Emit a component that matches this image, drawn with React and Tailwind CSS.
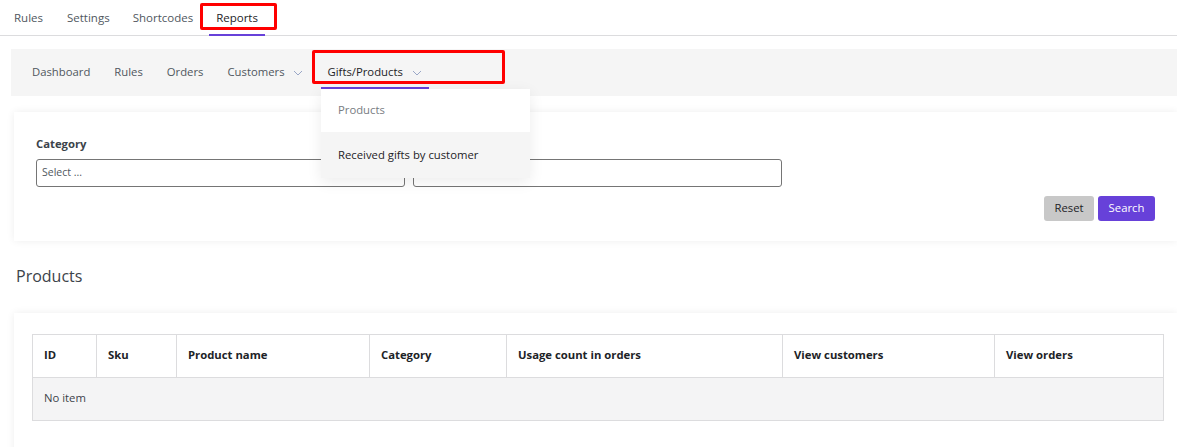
import React from 'react';

const Chevron = ({ className }) => (
  <svg className={className} width="10" height="6" viewBox="0 0 10 6" fill="none">
    <path d="M1 1l4 4 4-4" stroke="#9aa7c7" strokeWidth="1" />
  </svg>
);

const columns = [
  { label: 'ID', w: 'w-[64px]' },
  { label: 'Sku', w: 'w-[80px]' },
  { label: 'Product name', w: 'w-[193px]' },
  { label: 'Category', w: 'w-[137px]' },
  { label: 'Usage count in orders', w: 'w-[276px]' },
  { label: 'View customers', w: 'w-[212px]' },
  { label: 'View orders', w: 'w-[169px]' },
];

const App = () => {
  return (
    <div className="relative w-[1177px] h-[447px] overflow-hidden bg-white text-[#1d2327] text-[11.3px] font-['Open_Sans','Noto_Sans',sans-serif]">
      {/* top tabs */}
      <div className="flex items-end h-[36px] border-b border-[#dcdcde] pl-[14px] text-[11.5px] text-[#50575e]">
        <div className="pb-[9px]">Rules</div>
        <div className="pb-[9px] ml-[24px]">Settings</div>
        <div className="pb-[9px] ml-[23px]">Shortcodes</div>
        <div className="ml-[16px] px-[7px] pb-[8px] text-[#1d2327] border-b-[2px] border-[#6741d9] mb-[-1px]">
          Reports
        </div>
      </div>

      {/* sub nav */}
      <div className="mt-[13px] ml-[11px] h-[47px] bg-[#f5f5f5] flex items-center pl-[21px] text-[#50575e]">
        <div>Dashboard</div>
        <div className="ml-[24px]">Rules</div>
        <div className="ml-[24px]">Orders</div>
        <div className="ml-[24px] flex items-center">
          Customers
          <Chevron className="ml-[8px]" />
        </div>
        <div className="ml-[25px] flex items-center text-[#1d2327]">
          Gifts/Products
          <Chevron className="ml-[9px]" />
        </div>
      </div>

      {/* filter card */}
      <div className="mt-[16px] ml-[14px] bg-white shadow-[0_0_8px_rgba(0,0,0,0.07)] pt-[24px] pl-[22px] pr-[22px] pb-[20px]">
        <div className="font-bold text-[#3c434a]">Category</div>
        <div className="flex gap-[8px] mt-[6px]">
          <div className="w-[369px] h-[28px] border border-[#757575] rounded-[3px] flex items-center pl-[5px] text-[10.5px] text-[#50575e]">Select ...</div>
          <div className="w-[369px] h-[28px] border border-[#757575] rounded-[3px]"></div>
        </div>
        <div className="flex justify-end gap-[4px] mt-[9px]">
          <button className="w-[50px] h-[25px] rounded-[3px] bg-[#c8c8c8] text-[#1d2327]">Reset</button>
          <button className="w-[57px] h-[25px] rounded-[3px] bg-[#6741d9] text-white">Search</button>
        </div>
      </div>

      <h2 className="mt-[23px] ml-[16px] text-[16px] text-[#3c434a]">Products</h2>

      {/* table card */}
      <div className="mt-[25px] ml-[14px] h-[200px] bg-white shadow-[0_0_8px_rgba(0,0,0,0.07)] pt-[21px] pl-[18px]">
        <table className="border-collapse w-[1131px] table-fixed">
          <thead>
            <tr className="h-[43px]">
              {columns.map((c) => (
                <th key={c.label} className={`${c.w} border border-[#dcdcde] text-left pl-[11px] font-bold text-[#1d2327]`}>
                  {c.label}
                </th>
              ))}
            </tr>
          </thead>
          <tbody>
            <tr className="h-[43px] bg-[#f4f4f5]">
              <td colSpan={7} className="border border-[#dcdcde] pl-[11px] text-[#3c434a]">No item</td>
            </tr>
          </tbody>
        </table>
      </div>

      {/* dropdown menu over the page */}
      <div className="absolute left-[321px] top-[87px] w-[108px] h-[2px] bg-[#6741d9]"></div>
      <div className="absolute z-10 left-[321px] top-[89px] w-[209px] bg-white shadow-[0_4px_14px_rgba(0,0,0,0.08)]">
        <div className="h-[43px] flex items-center pl-[17px] text-[#787c82]">Products</div>
        <div className="h-[46px] flex items-center pl-[17px] bg-[#f5f5f5] text-[#1d2327]">Received gifts by customer</div>
      </div>

      {/* red highlight boxes */}
      <div className="absolute left-[200px] top-[3px] w-[77px] h-[27px] border-[3px] border-[#ff0000] rounded-[2px]"></div>
      <div className="absolute left-[312px] top-[50px] w-[193px] h-[34px] border-[3px] border-[#ff0000] rounded-[2px]"></div>
    </div>
  );
};

export default App;
